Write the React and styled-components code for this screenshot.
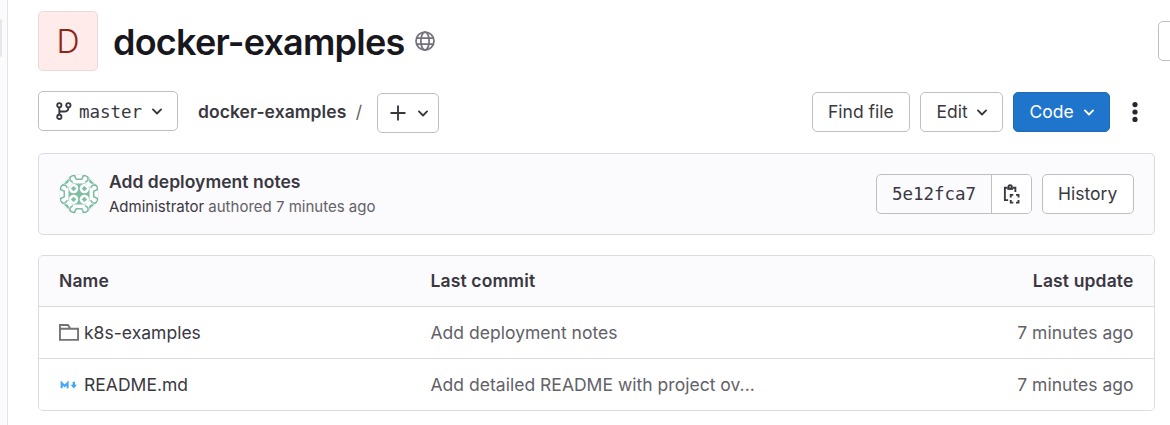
import React from "react";
import styled, { createGlobalStyle, css } from "styled-components";

const Global = createGlobalStyle`
  * { box-sizing: border-box; }
  body {
    margin: 0;
    background: #fff;
    color: #3a383f;
    font-family: Inter, "Noto Sans", sans-serif;
    font-size: 17.5px;
    line-height: 24px;
    overflow: hidden;
  }
`;

const Page = styled.div`
  display: flex;
  width: 1170px;
  height: 425px;
  overflow: hidden;
  background: #fff;
`;
const Sidebar = styled.aside`
  flex: 0 0 8px;
  padding-top: 19px;
  background: #fbfafd;
  border-right: 1px solid #e4e3e8;
`;
const SidebarItem = styled.div`
  width: 2px;
  height: 38px;
  border-radius: 0 3px 3px 0;
  background: #e7e6e9;
`;
const Main = styled.main`
  flex: 0 0 1177px;
  padding: 11px 0 0 30px;
`;
const Header = styled.header`
  display: flex;
  height: 60px;
`;
const ProjectAvatar = styled.div`
  width: 60px;
  height: 60px;
  border: 1px solid #ecd9d9;
  border-radius: 5px;
  background: #ffebe9;
  color: #8b2615;
  font-size: 32px;
  font-weight: 350;
  line-height: 59px;
  text-align: center;
`;
const Title = styled.h1`
  margin: 1px 0 0 15px;
  width: 292px;
  color: #18171d;
  font-size: 36px;
  font-weight: 600;
  line-height: 60px;
  letter-spacing: -0.77px;
  white-space: nowrap;
`;
const Visibility = styled.div`
  display: flex;
  margin: 20px 0 0 10px;
  height: 20px;
`;
const HeaderAction = styled.div`
  margin: 10px 0 0 auto;
  width: 27px;
  height: 40px;
  border: 1px solid #bfbfc3;
  border-radius: 5px;
`;
const Toolbar = styled.div`
  display: flex;
  width: 1117px;
  margin-top: 20px;
  height: 42px;
`;
const Button = styled.button`
  display: flex;
  align-items: center;
  flex-shrink: 0;
  width: ${(p) => p.$w}px;
  height: 40px;
  margin: 0;
  padding: 0 0 0 15px;
  border: 1px solid #bfbfc3;
  border-radius: 5px;
  background: #fff;
  color: #3a383f;
  font: 400 17.5px/24px Inter, "Noto Sans", sans-serif;
  text-align: left;
  white-space: nowrap;
  ${(p) => p.$primary && css`
    background: #1f75cb;
    border-color: #2268b4;
    color: #fff;
  `}
`;
const AddButton = styled(Button)`
  margin: 2px 0 0 15px;
  padding-left: 10px;
  gap: 5px;
`;
const Mono = styled.span`
  font-family: "DejaVu Sans Mono", "Liberation Mono", monospace;
  font-size: 17.5px;
  letter-spacing: -0.04px;
`;
const Label = styled.span`
  flex-shrink: 0;
  width: ${(p) => p.$w}px;
  padding-left: 0.5px;
`;
const RefName = styled(Label)`
  padding: 1px 0 0 5px;
`;
const Crumbs = styled.div`
  display: flex;
  margin-left: 20px;
  line-height: 41px;
  width: 164px;
`;
const CrumbLink = styled.span`
  width: 158px;
  font-weight: 600;
  letter-spacing: 0.07px;
  white-space: nowrap;
`;
const Slash = styled.span`
  color: #626168;
`;
const Actions = styled.div`
  display: flex;
  margin: 1px 0 0 auto;
  gap: 10px;
`;
const More = styled.div`
  display: flex;
  align-items: center;
  justify-content: center;
  width: 40px;
  height: 40px;
  margin-left: -5px;
`;
const Commit = styled.section`
  display: flex;
  width: 1117px;
  height: 82px;
  margin-top: 20px;
  padding: 20px 20px 0;
  border: 1px solid #dcdcde;
  border-radius: 5px;
  background: #fbfafd;
`;
const CommitText = styled.div`
  margin: -5px 0 0 10px;
`;
const CommitTitle = styled.div`
  font-weight: 600;
  line-height: 25px;
  letter-spacing: 0.03px;
`;
const CommitMeta = styled.div`
  color: #626168;
  font-size: 15px;
  line-height: 26px;
`;
const Author = styled.span`
  color: #3a383f;
`;
const CommitActions = styled.div`
  display: flex;
  margin-left: auto;
  gap: 10px;
`;
const ShaGroup = styled.div`
  display: flex;
  width: 156px;
  height: 40px;
  border: 1px solid #bfbfc3;
  border-radius: 5px;
`;
const Sha = styled.div`
  width: 115px;
  padding-left: 15px;
  border-right: 1px solid #bfbfc3;
  line-height: 38px;
`;
const CopyButton = styled.div`
  display: flex;
  flex: 1;
  align-items: center;
  justify-content: center;
  padding-right: 1px;
  border-radius: 0 4px 4px 0;
  background: #fff;
`;
const Files = styled.section`
  width: 1117px;
  margin-top: 20px;
  border: 1px solid #dcdcde;
  border-radius: 5px;
  overflow: hidden;
`;
const Row = styled.div`
  display: grid;
  grid-template-columns: 371.5px 1fr auto;
  align-items: center;
  height: ${(p) => (p.$head ? 50 : 52)}px;
  padding: 0 20.5px 0 20px;
  border-top: ${(p) => (p.$head ? "0" : "1px solid #dcdcde")};
  background: ${(p) => (p.$head ? "#fbfafd" : "#fff")};
  font-weight: ${(p) => (p.$head ? 600 : 400)};
  letter-spacing: ${(p) => (p.$head ? 0.14 : 0.02)}px;
  color: ${(p) => (p.$head ? "#3a383f" : "#626168")};
`;
const FileName = styled.span`
  display: flex;
  align-items: center;
  gap: 5px;
  color: #3a383f;
`;

const Icon = styled.svg`
  flex-shrink: 0;
  width: 20px;
  height: 20px;
  fill: none;
`;
const Stroke = ({ children, color = "currentColor", width = 1.5 }) => (
  <Icon viewBox="0 0 16 16" stroke={color} strokeWidth={width}>
    {children}
  </Icon>
);
const Chevron = () => (
  <Stroke><path d="m4.75 6.75 3.25 3.25 3.25-3.25" strokeLinecap="round" strokeLinejoin="round" /></Stroke>
);
const Globe = () => (
  <Stroke color="#737278" width={1.4}>
    <circle cx="8" cy="8" r="7.2" />
    <ellipse cx="8" cy="8" rx="3.3" ry="7.2" />
    <path d="M1.5 5.6h13M1.5 10.4h13" />
  </Stroke>
);
const Branch = () => (
  <Stroke>
    <circle cx="4.25" cy="3.4" r="1.7" />
    <circle cx="4.25" cy="12.7" r="1.7" />
    <circle cx="11.5" cy="3.4" r="1.7" />
    <path d="M4.25 5.1V11M11.5 5.1c0 2.3-1.2 3.3-3.3 3.3H4.25" />
  </Stroke>
);
const Copy = () => (
  <Stroke>
    <path d="M5.2 3H3.1v9.9h2.6M9.4 3h2.1v3.4" />
    <circle cx="7.3" cy="2.3" r="1.35" />
    <path d="M5 3.9h4.6" />
    <path d="M7.8 10.8V8.7h2M12 8.7h2v2.1M14 12.8v2.1h-2M9.8 14.9h-2v-2.1" />
  </Stroke>
);
const Folder = () => (
  <Stroke color="#737278">
    <path d="M.75 13.5V1.6h6.4l2 3h6.1v8.9zM.75 4.6h8.6" />
  </Stroke>
);
const Markdown = () => (
  <Icon viewBox="0 0 20 20" stroke="#42a5f5" strokeWidth="2">
    <path d="M2.6 13.2V8L5.6 11l3-3v5.2" />
    <path d="M14.8 6.8v4" strokeWidth="2.4" />
    <path d="M11.6 9.8H18l-3.2 3.8z" fill="#42a5f5" stroke="none" />
  </Icon>
);

const Quarter = () => (
  <g>
    <path d="M4.5 9.8 9.8 4.5V8L8 9.8z" />
    <path
      d="M20 5.3h-2.8L15.5 1.6h-2.7l-1.9 2.2.3 2.6 2.6 2M5.3 20v-2.8L1.6 15.5v-2.7l2.2-1.9 2.6.3 2 2.6"
      fill="none" stroke="#7ebfa4" strokeWidth="1.6"
    />
    <path d="M13.5 9.5H20V20H9.5v-6.5z" />
    <circle cx="14.6" cy="14.6" r="4.7" fill="#fff" />
    <path d="M14.6 11.9l2.7 2.7-2.7 2.7-2.7-2.7z" />
  </g>
);
const Identicon = () => (
  <svg width="40" height="40" viewBox="0 0 40 40">
    <defs><clipPath id="avatar"><circle cx="20" cy="20" r="20" /></clipPath></defs>
    <g clipPath="url(#avatar)" fill="#7ebfa4">
      <rect width="40" height="40" fill="#fff" />
      <Quarter />
      <g transform="matrix(-1 0 0 1 40 0)"><Quarter /></g>
      <g transform="matrix(1 0 0 -1 0 40)"><Quarter /></g>
      <g transform="matrix(-1 0 0 -1 40 40)"><Quarter /></g>
    </g>
    <circle cx="20" cy="20" r="19.5" fill="none" stroke="#1f1e24" strokeOpacity="0.08" />
  </svg>
);

const files = [
  { name: "k8s-examples", icon: <Folder />, commit: "Add deployment notes" },
  { name: "README.md", icon: <Markdown />, commit: "Add detailed README with project ov..." },
];

export default function App() {
  return (
    <Page>
      <Global />
      <Sidebar><SidebarItem /></Sidebar>
      <Main>
        <Header>
          <ProjectAvatar>D</ProjectAvatar>
          <Title>docker-examples</Title>
          <Visibility><Globe /></Visibility>
          <HeaderAction />
        </Header>
        <Toolbar>
          <Button $w={140}>
            <Branch />
            <RefName $w={73}><Mono>master</Mono></RefName>
            <Chevron />
          </Button>
          <Crumbs><CrumbLink>docker-examples</CrumbLink><Slash>/</Slash></Crumbs>
          <AddButton $w={62}>
            <Stroke><path d="M8 2v12M2 8h12" /></Stroke>
            <Chevron />
          </AddButton>
          <Actions>
            <Button $w={98}>Find file</Button>
            <Button $w={83}><Label $w={36}>Edit</Label><Chevron /></Button>
            <Button $w={97} $primary><Label $w={50}>Code</Label><Chevron /></Button>
            <More>
              <svg width="20" height="20" viewBox="0 0 20 20" fill="#28272d">
                <circle cx="10" cy="2.6" r="2.6" /><circle cx="10" cy="10" r="2.6" /><circle cx="10" cy="17.4" r="2.6" />
              </svg>
            </More>
          </Actions>
        </Toolbar>
        <Commit>
          <Identicon />
          <CommitText>
            <CommitTitle>Add deployment notes</CommitTitle>
            <CommitMeta><Author>Administrator</Author> authored 7 minutes ago</CommitMeta>
          </CommitText>
          <CommitActions>
            <ShaGroup>
              <Sha><Mono>5e12fca7</Mono></Sha>
              <CopyButton><Copy /></CopyButton>
            </ShaGroup>
            <Button $w={92}>History</Button>
          </CommitActions>
        </Commit>
        <Files>
          <Row $head><span>Name</span><span>Last commit</span><span>Last update</span></Row>
          {files.map((f) => (
            <Row key={f.name}>
              <FileName>{f.icon}{f.name}</FileName>
              <span>{f.commit}</span>
              <span>7 minutes ago</span>
            </Row>
          ))}
        </Files>
      </Main>
    </Page>
  );
}
